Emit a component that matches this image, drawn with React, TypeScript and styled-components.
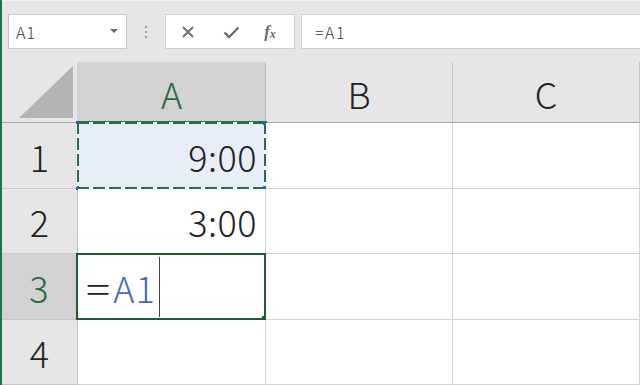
import React from "react";
import styled, { createGlobalStyle } from "styled-components";

const Global = createGlobalStyle`
  html, body { margin: 0; padding: 0; background: #ffffff; overflow: hidden; }
  body { font-family: "Noto Sans CJK JP", "Noto Sans", sans-serif; }
`;

const Window = styled.div`
  display: flex;
  width: 640px;
  height: 385px;
  overflow: hidden;
  background: #e6e6e6;
`;

const Stripe = styled.div`
  width: 2px;
  flex: none;
  background: #217346;
`;

const Main = styled.div`
  flex: 1;
  display: flex;
  flex-direction: column;
  min-width: 0;
`;

const FormulaBar = styled.div`
  height: 62px;
  flex: none;
  display: flex;
  align-items: flex-start;
  padding: 13px 0 0 6px;
  box-sizing: border-box;
  border-top: 1px solid #f2f2f2;
  background: #e6e6e6;
`;

const NameBox = styled.div`
  width: 119px;
  height: 35px;
  box-sizing: border-box;
  background: #ffffff;
  border: 1px solid #c8c8c8;
  display: flex;
  align-items: center;
  justify-content: space-between;
  padding: 0 8px 0 7px;
  font-size: 16px;
  font-weight: 300;
  letter-spacing: 1px;
  color: #3a3a3a;
`;

const Caret = styled.span`
  width: 0;
  height: 0;
  border-left: 4px solid transparent;
  border-right: 4px solid transparent;
  border-top: 4px solid #6a6a6a;
  margin-top: -2px;
`;

const Grip = styled.div`
  width: 38px;
  height: 35px;
  display: flex;
  flex-direction: column;
  align-items: center;
  justify-content: center;
  gap: 3px;
`;

const GripDot = styled.span`
  width: 2px;
  height: 2px;
  background: #9a9a9a;
`;

const FxBox = styled.div`
  width: 130px;
  height: 35px;
  box-sizing: border-box;
  background: #ffffff;
  border: 1px solid #cfcfcf;
  display: grid;
  grid-template-columns: 44px 42px 1fr;
  align-items: center;
  justify-items: center;
  color: #6b6b6b;
`;

const FxLabel = styled.span`
  font-family: "Liberation Serif", "DejaVu Serif", serif;
  font-style: italic;
  font-size: 17px;
  font-weight: bold;
  color: #6b6b6b;
  padding-right: 6px;
  sub { font-size: 12px; vertical-align: -1px; }
`;

const FormulaInput = styled.div`
  flex: 1;
  height: 35px;
  margin-left: 6px;
  box-sizing: border-box;
  background: #ffffff;
  border: 1px solid #cfcfcf;
  border-right: none;
  display: flex;
  align-items: center;
  padding-left: 13px;
  font-size: 16px;
  font-weight: 300;
  letter-spacing: 1.5px;
  color: #3a3a3a;
`;

const Sheet = styled.div`
  flex: 1;
  display: grid;
  grid-template-columns: 76px 188px 187px 1fr;
  grid-template-rows: 61px 66px 65px 66px 65px;
  background: #ffffff;
  font-size: 36px;
  font-weight: 300;
`;

const Corner = styled.div`
  background: #e6e6e6;
  border-bottom: 1px solid #a8a8a8;
  border-right: 1px solid #d0d0d0;
  display: flex;
  align-items: flex-end;
  justify-content: flex-end;
  padding: 0 4px 4px 0;
`;

const ColHead = styled.div<{ $active?: boolean }>`
  background: ${(p) => (p.$active ? "#d2d2d2" : "#e6e6e6")};
  border-right: 1px solid #c4c4c4;
  border-bottom: ${(p) => (p.$active ? "2px solid #217346" : "1px solid #a8a8a8")};
  display: flex;
  align-items: center;
  justify-content: center;
  color: ${(p) => (p.$active ? "#1d6b3f" : "#222222")};
  box-sizing: border-box;
  padding-top: 2px;
`;

const RowHead = styled.div<{ $active?: boolean }>`
  background: ${(p) => (p.$active ? "#d2d2d2" : "#e6e6e6")};
  border-bottom: 1px solid #c8c8c8;
  border-right: ${(p) => (p.$active ? "2px solid #217346" : "1px solid #bdbdbd")};
  display: flex;
  align-items: center;
  justify-content: center;
  color: ${(p) => (p.$active ? "#1d6b3f" : "#222222")};
  box-sizing: border-box;
`;

const Cell = styled.div<{ $tint?: boolean }>`
  position: relative;
  background: ${(p) => (p.$tint ? "#e8eef8" : "#ffffff")};
  border-right: 1px solid #d4d4d4;
  border-bottom: 1px solid #d4d4d4;
  display: flex;
  align-items: center;
  justify-content: flex-end;
  padding-right: 8px;
  color: #222222;
  letter-spacing: 0.5px;
  box-sizing: border-box;
`;

const EditCell = styled(Cell)`
  justify-content: flex-start;
  padding-left: 8px;
  letter-spacing: 0;
`;

const Ants = styled.span`
  position: absolute;
  inset: -1px -1px -1px -1px;
  pointer-events: none;
  background:
    repeating-linear-gradient(90deg, #1f7244 0 12px, #ffffff 12px 16px) top left / 100% 2px no-repeat,
    repeating-linear-gradient(90deg, #1f7244 0 12px, #ffffff 12px 16px) bottom left / 100% 2px no-repeat,
    repeating-linear-gradient(180deg, #1f7244 0 12px, #ffffff 12px 16px) top left / 2px 100% no-repeat,
    repeating-linear-gradient(180deg, #1f7244 0 12px, #ffffff 12px 16px) top right / 2px 100% no-repeat;
`;

const Handle = styled.span<{ $pos: "tl" | "tr" | "bl" | "br"; $size: number; $color: string }>`
  position: absolute;
  width: ${(p) => p.$size}px;
  height: ${(p) => p.$size}px;
  background: ${(p) => p.$color};
  ${(p) => (p.$pos[0] === "t" ? "top" : "bottom")}: ${(p) => -Math.ceil(p.$size / 2)}px;
  ${(p) => (p.$pos[1] === "l" ? "left" : "right")}: ${(p) => -Math.ceil(p.$size / 2)}px;
`;

const ActiveFrame = styled.span`
  position: absolute;
  inset: -1px -1px -1px -2px;
  border: 2px solid #1d5a36;
  pointer-events: none;
`;

const Eq = styled.span`
  color: #222222;
  display: inline-block;
  transform: scaleX(1.25);
  transform-origin: left center;
  margin-right: 5px;
`;

const Ref = styled.span`
  color: #3a6cc4;
  margin-left: 3px;
  letter-spacing: 1px;
`;

const Cursor = styled.span`
  display: inline-block;
  width: 1px;
  height: 60px;
  background: #444444;
  margin-left: 3px;
`;

export default function App() {
  return (
    <>
      <Global />
      <Window>
        <Stripe />
        <Main>
          <FormulaBar>
            <NameBox>
              <span>A1</span>
              <Caret />
            </NameBox>
            <Grip>
              <GripDot />
              <GripDot />
              <GripDot />
            </Grip>
            <FxBox>
              <svg width="14" height="14" viewBox="0 0 14 14">
                <path d="M2 2 L12 12 M12 2 L2 12" stroke="#6b6b6b" strokeWidth="1.8" fill="none" />
              </svg>
              <svg width="17" height="14" viewBox="0 0 17 14">
                <path d="M1.5 7.5 L6 12 L15.5 2.5" stroke="#6b6b6b" strokeWidth="2.4" fill="none" />
              </svg>
              <FxLabel>
                f<sub>x</sub>
              </FxLabel>
            </FxBox>
            <FormulaInput>=A1</FormulaInput>
          </FormulaBar>
          <Sheet>
            <Corner>
              <svg width="54" height="52" viewBox="0 0 54 52">
                <polygon points="0,52 54,52 54,0" fill="#b4b4b4" />
              </svg>
            </Corner>
            <ColHead $active>A</ColHead>
            <ColHead>B</ColHead>
            <ColHead>C</ColHead>

            <RowHead>1</RowHead>
            <Cell $tint>
              9:00
              <Ants />
              <Handle $pos="tl" $size={3} $color="#2f5fbf" />
              <Handle $pos="tr" $size={4} $color="#2f5fbf" />
              <Handle $pos="bl" $size={3} $color="#2f5fbf" />
              <Handle $pos="br" $size={5} $color="#2f5fbf" />
            </Cell>
            <Cell />
            <Cell />

            <RowHead>2</RowHead>
            <Cell>3:00</Cell>
            <Cell />
            <Cell />

            <RowHead $active>3</RowHead>
            <EditCell>
              <Eq>=</Eq>
              <Ref>A1</Ref>
              <Cursor />
              <ActiveFrame />
              <Handle $pos="br" $size={6} $color="#1d5a36" />
            </EditCell>
            <Cell />
            <Cell />

            <RowHead>4</RowHead>
            <Cell />
            <Cell />
            <Cell />
          </Sheet>
        </Main>
      </Window>
    </>
  );
}
